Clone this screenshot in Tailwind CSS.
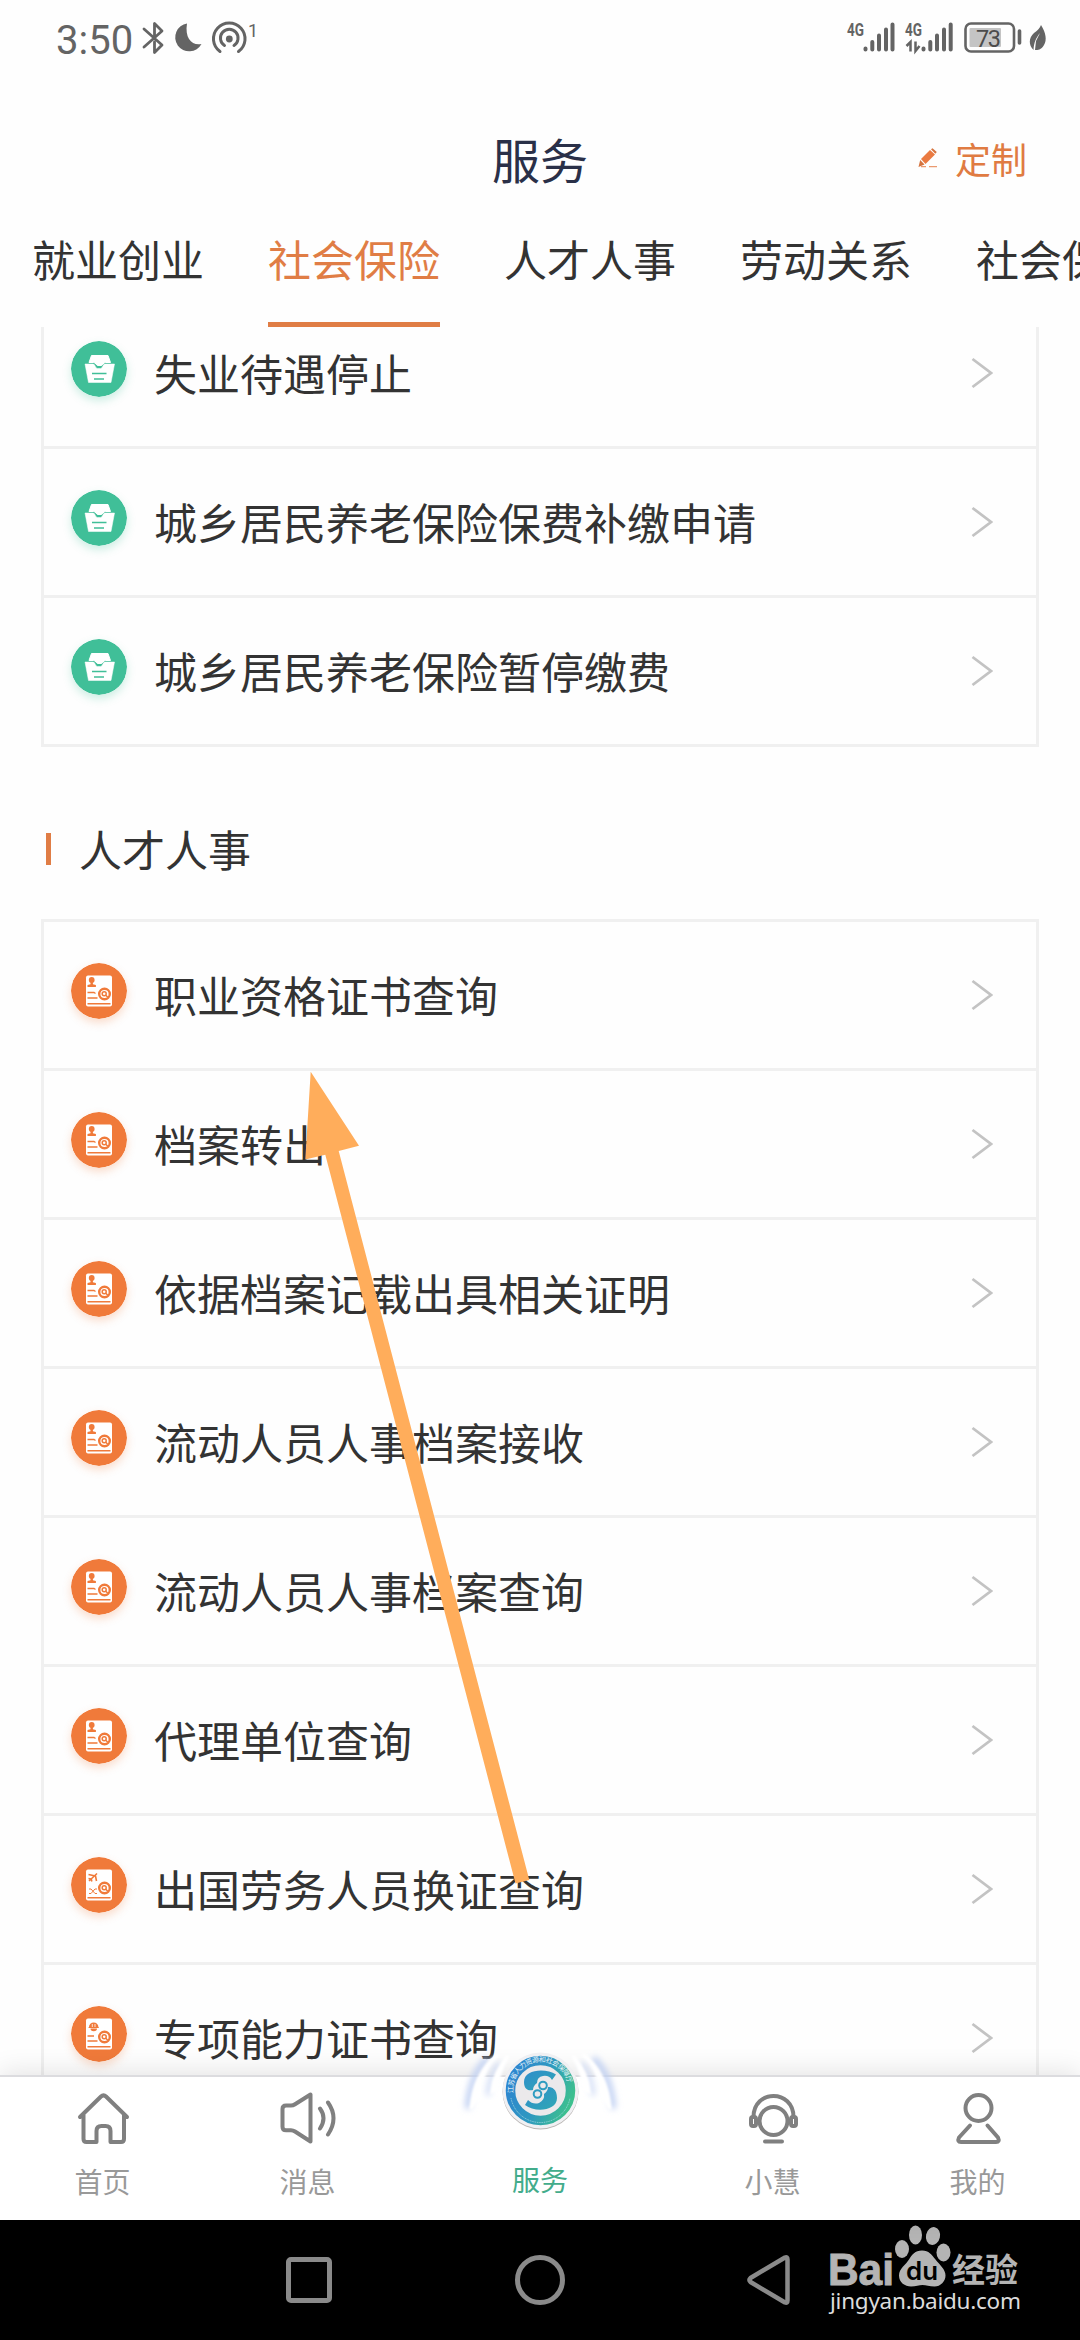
<!DOCTYPE html>
<html lang="zh-CN">
<head>
<meta charset="utf-8">
<title>服务</title>
<script src="https://cdn.jsdelivr.net/npm/@tailwindcss/browser@4"></script>
</head>
<body class="bg-white">
<svg class="hidden">
  <symbol id="tray" viewBox="0 0 56 56">
    <circle cx="28" cy="28" r="28" fill="#40bf98"/>
    <path d="M20.500 14.500h16.500l2.500 7h-5c-2.500 0-2.500 3-4.500 3h-3c-2 0-2-3-4.500-3h-4.500z" fill="#fff" stroke="#fff" stroke-linejoin="round"/>
    <path d="M14 23h8c2.500 0 2 4.500 4.500 4.500h3c2.500 0 2-4.500 4.500-4.500h9.500l-3.500 18.500H17.500z" fill="#fff" stroke="#fff" stroke-linejoin="round" stroke-width="0.500"/>
    <path d="M21 32.500h14.500M23 38h10" stroke="#40bf98" stroke-width="1.400"/>
  </symbol>
  <symbol id="sheet" viewBox="0 0 56 56">
    <circle cx="28" cy="28" r="28" fill="#f07a3a"/>
    <rect x="15" y="12.500" width="26" height="31" rx="2" fill="#fff"/>
    <path d="M16.500 40.700h23" stroke="#f07a3a" stroke-width="1.600"/>
    <circle cx="33.500" cy="31" r="5.300" fill="#fff" stroke="#f07a3a" stroke-width="2.400"/>
    <circle cx="33.200" cy="30.700" r="2" fill="none" stroke="#f07a3a" stroke-width="1.500"/>
    <path d="M34.800 32.300l2 2" stroke="#f07a3a" stroke-width="1.500"/>
  </symbol>
  <symbol id="person" viewBox="0 0 56 56">
    <use href="#sheet"/>
    <circle cx="20.700" cy="17" r="2.900" fill="#f07a3a"/>
    <path d="M19.500 18.500h2.400v2.700l3 .8v2h-8.400v-2l3-.8z" fill="#f07a3a"/>
    <path d="M16.500 29.500h6.500l1.500 1M16.500 35h10" stroke="#f07a3a" stroke-width="1.300" fill="none"/>
  </symbol>
  <symbol id="plane" viewBox="0 0 56 56">
    <use href="#sheet"/>
    <path d="M18 24l8-7.500M17.500 17.500l7 1.500 1 5M17.500 21.500l2.800.5.500 2.500" stroke="#f07a3a" stroke-width="1.600" fill="none" stroke-linejoin="round"/>
    <path d="M18 32h2l4 4.500h2M18 36.500h2l4-4.500h2" stroke="#f07a3a" stroke-width="1" fill="none"/>
  </symbol>
  <symbol id="helmet" viewBox="0 0 56 56">
    <use href="#sheet"/>
    <path d="M18 21a4.700 4.500 0 0 1 9.400 0l.8 1h-11zM19.500 22.500h6.500a3.200 2.600 0 0 1-6.500 0z" fill="#f07a3a"/>
    <path d="M21.300 18v3M24 18v3" stroke="#fff" stroke-width=".8"/>
    <path d="M16.500 30h6.500M16.500 35h10" stroke="#f07a3a" stroke-width="1.300"/>
  </symbol>
</svg>

<div class="relative flex h-[2340px] w-[1080px] flex-col overflow-hidden bg-[#fefefe] font-['Noto_Sans_CJK_SC',sans-serif] text-[#333]">

  <!-- status bar -->
  <div class="flex h-20 shrink-0 items-center pl-14 pr-8">
    <div class="pt-px font-[Roboto] text-[40px] leading-none text-[#646464]">3:50</div>
    <svg class="ml-1.5 h-20 w-32" viewBox="139 0 128 80" fill="none" stroke="#646464" stroke-width="2.800" stroke-linejoin="round" stroke-linecap="round">
      <path d="M144 29L162 45 154.500 52.500V42M144 47L162 31 154.500 23.500V35"/>
      <path d="M187 23.500a14 14 0 1 0 14.500 20.500c-9 2-17-5-14.500-20.500z" fill="#646464" stroke="none"/>
      <g stroke-width="3">
        <path d="M220 51.500a15.800 15.800 0 1 1 18.500 0M224.500 45.500a8.800 8.800 0 1 1 9.500 0"/>
        <circle cx="229.300" cy="39" r="3.400" fill="#646464" stroke="none"/>
      </g>
      <text x="248" y="36.500" font-family="Roboto" font-size="18" fill="#646464" stroke="none">1</text>
    </svg>
    <svg class="ml-auto h-20 w-[204px]" viewBox="844 0 204 80" fill="none" stroke="#646464" stroke-linecap="round">
      <g fill="#646464" stroke="none" font-family="Roboto" font-weight="700" font-size="18">
        <text x="847" y="35.500" textLength="17" lengthAdjust="spacingAndGlyphs">4G</text>
        <text x="905" y="35.500" textLength="17" lengthAdjust="spacingAndGlyphs">4G</text>
      </g>
      <path stroke-width="4" d="M865.500 48.500v1M872.300 42v7.500M879 35.500v14M886 29.500v20M892.500 24.500v25M923.500 48.500v1M930.300 42v7.500M937 35.500v14M944 29.500v20M950.700 24.500v25"/>
      <path stroke-width="2.500" stroke-linecap="butt" d="M906.500 46l4-4v9.500M915.500 41.500v9.500l4-5"/>
      <rect x="965.500" y="23.500" width="48.500" height="28" rx="5.500" stroke-width="2.600"/>
      <rect x="969.500" y="28" width="31.500" height="19" rx="1" fill="#c4c4c4" stroke="none"/>
      <text x="976" y="46.500" font-family="Roboto" font-size="23.500" fill="#4c4c4c" stroke="none" textLength="25">73</text>
      <path stroke-width="3.600" d="M1019.500 31v12"/>
      <path d="M1041 25c5 8 6 15 3 20s-6 5-9 5l1-9 4-8c-4 5-6 9-6.500 17-5-5-5-12 .5-17 4-3 6-5 7-8z" fill="#646464" stroke="none"/>
    </svg>
  </div>

  <!-- title bar -->
  <div class="grid h-[120px] shrink-0 grid-cols-3 items-center pt-9 pr-[53px] pl-[53px]">
    <div></div>
    <h1 class="text-center text-[48px] leading-none text-[#2a3048]">服务</h1>
    <div class="flex items-center justify-end text-[36px] leading-none text-[#e07b42]">
      <svg class="mr-[17px] h-5 w-5" viewBox="0 0 20 20">
        <path d="M3 11l9-9 5 4.500-9.500 9.500z" fill="#ea7a41"/>
        <path d="M13 1.200l1.500-1 4.300 3.800-1.500 1.800zM2.200 12l4.300 4.500L.5 19z" fill="#d5743f"/>
        <path d="M3 18.700h5M11 18.700h8" stroke="#ea9a70" stroke-width="1.300"/>
      </svg>
      <span>定制</span>
    </div>
  </div>

  <!-- category tabs -->
  <div class="flex h-[127px] shrink-0 gap-16 overflow-hidden pt-[26px] pl-8 text-[43px] leading-[64px] whitespace-nowrap">
    <div class="h-[101px] shrink-0">就业创业</div>
    <div class="h-[101px] shrink-0 border-b-[5px] border-[#e07d45] text-[#e07d45]">社会保险</div>
    <div class="h-[101px] shrink-0">人才人事</div>
    <div class="h-[101px] shrink-0">劳动关系</div>
    <div class="h-[101px] shrink-0">社会保障卡</div>
  </div>

  <!-- scrolling service list -->
  <div class="h-[1748px] shrink-0 overflow-hidden px-[41px]">
    <div id="insurance" class="-mt-[27px] border-x-[3px] border-[#f0f0f0]"></div>
    <div class="flex h-[172px] items-center gap-7 pt-[31px] pl-[5px]">
      <div class="h-8 w-[5px] bg-[#e07d45]"></div>
      <h2 class="text-[43px] leading-none">人才人事</h2>
    </div>
    <div id="talent" class="border-x-[3px] border-t-[3px] border-[#f0f0f0]"></div>
  </div>

  <!-- tab bar -->
  <div class="relative grid h-[145px] shrink-0 grid-cols-[205px_205px_260px_205px_205px] border-t-2 border-[#dcdcdf] bg-white text-center text-[28px] leading-none text-[#999] shadow-[0_-4px_24px_rgba(0,0,0,0.10)]">
    <div class="flex flex-col items-center gap-[22px] pt-[14px]">
      <svg class="h-[54px] w-[54px]" viewBox="0 0 54 54" fill="none" stroke="#808080" stroke-width="4" stroke-linecap="round" stroke-linejoin="round">
        <path d="M4 26L25 5.500Q27.500 3 30 5.500L51 26M7.500 24v24q0 3 3 3h10V40q0-5 5-5h4q5 0 5 5v11h10.500q3 0 3-3V24"/>
      </svg>
      <span>首页</span>
    </div>
    <div class="flex flex-col items-center gap-[22px] pt-[14px]">
      <svg class="h-[54px] w-[60px]" viewBox="0 0 60 54" fill="none" stroke="#808080" stroke-width="4" stroke-linecap="round" stroke-linejoin="round">
        <path d="M32.500 3.500v47L17 40.500q-2-1.300-4-1.300H8q-3.500 0-3.500-3.500V18q0-3.500 3.500-3.500h5q2 0 4-1.300zM42 17.500q7 9.500 0 20M50 11.500q11 15.500 0 32"/>
      </svg>
      <span>消息</span>
    </div>
    <div class="pt-[88px] text-[#43ac8b]">服务</div>
    <div class="flex flex-col items-center gap-[22px] pt-[14px]">
      <svg class="h-[54px] w-[54px]" viewBox="0 0 54 54" fill="none" stroke="#808080" stroke-width="4" stroke-linecap="round">
        <circle cx="27.500" cy="30" r="14"/>
        <path d="M7.500 26C7.500-2 47.500-2 47.500 26M19 50.500h17"/>
        <rect x="5" y="26" width="5" height="9" rx="2"/>
        <rect x="45" y="26" width="5" height="9" rx="2"/>
      </svg>
      <span>小慧</span>
    </div>
    <div class="flex flex-col items-center gap-[22px] pt-[14px]">
      <svg class="h-[54px] w-[54px]" viewBox="0 0 54 54" fill="none" stroke="#808080" stroke-width="4" stroke-linecap="round" stroke-linejoin="round">
        <circle cx="27.500" cy="17" r="13"/>
        <path d="M19 34.500L8 46.500q-2 4.500 2 4.500h35q4 0 2-4.500L36.500 34.500"/>
      </svg>
      <span>我的</span>
    </div>

    <!-- raised emblem -->
    <svg class="absolute -top-[45px] left-[450px] h-[100px] w-[180px]" viewBox="450 2032 180 100">
      <defs>
        <linearGradient id="ring" x1="0" y1="0.300" x2="1" y2="0.700">
          <stop offset="0" stop-color="#2e86cf"/><stop offset=".5" stop-color="#2e98c0"/><stop offset="1" stop-color="#3dc08e"/>
        </linearGradient>
        <linearGradient id="mark" x1="0" y1="0" x2="1" y2="1">
          <stop offset="0" stop-color="#2f8dcc"/><stop offset="1" stop-color="#2fa8b4"/>
        </linearGradient>
        <filter id="haze" x="-60%" y="-20%" width="220%" height="140%"><feGaussianBlur stdDeviation="3"/></filter>
        <filter id="soft" x="-30%" y="-10%" width="160%" height="120%"><feGaussianBlur stdDeviation=".9"/></filter>
        <path id="arc" d="M513.500 2093a27.500 27.500 0 1 1 54.500 0"/>
        <g id="wave" fill="none" stroke-linecap="round">
          <path d="M468 2106C470 2086 476 2070 486 2060" stroke="#bccdf2" stroke-width="6" filter="url(#haze)"/>
          <path d="M471 2109C473 2084 482 2067 498 2054c-11 14-17 24-20 44z" fill="#fff" stroke="#fff" stroke-width="3" filter="url(#soft)"/>
          <path d="M488 2094C489 2082 493 2072 499 2064" stroke="#c6d4f4" stroke-width="4" filter="url(#haze)"/>
          <path d="M492 2092C493 2078 499 2066 508 2056c-7 13-10 22-12 34z" fill="#fff" stroke="#fff" stroke-width="3" filter="url(#soft)"/>
        </g>
      </defs>
      <use href="#wave"/>
      <use href="#wave" transform="translate(1081 0) scale(-1 1)"/>
      <circle cx="540.500" cy="2091.500" r="38" fill="#b9b5b3"/>
      <circle cx="540.500" cy="2090.500" r="38" fill="#f0f0f3"/>
      <circle cx="540.500" cy="2090.500" r="30" fill="#ebe9eb" stroke="url(#ring)" stroke-width="9.500"/>
      <text font-family="Noto Sans CJK SC" font-size="7" fill="#e8f4fa"><textPath href="#arc" textLength="84">江苏省人力资源和社会保障厅</textPath></text>
      <path d="M511 2098a30 30 0 0 0 59 0" fill="none" stroke="#9fd6e0" stroke-width="1" stroke-dasharray="1 .8"/>
      <path d="M556 2074.500C546 2068 524 2069 524 2082C524 2090 529 2091 533 2090Q533 2086 537 2083Q537 2077 543 2076Q549 2075 552 2080Z" fill="url(#mark)"/>
      <path d="M525 2105C535 2113 557 2111 557 2098C557 2089 552 2087 548 2087Q548 2091 544 2094Q545 2100 539 2103Q533 2105 528 2100Z" fill="url(#mark)"/>
      <circle cx="543" cy="2085.500" r="3.800" fill="none" stroke="#2f9cc0" stroke-width="2"/>
      <circle cx="537.500" cy="2094" r="3.800" fill="none" stroke="#2f9cc0" stroke-width="2"/>
    </svg>
  </div>

  <!-- system navigation -->
  <div class="flex h-[120px] shrink-0 items-center bg-black pl-[286px]">
    <div class="h-[46px] w-[46px] rounded-[5px] border-[5px] border-[#8a8a8a]"></div>
    <div class="ml-[183px] h-[50px] w-[50px] rounded-full border-[5px] border-[#8a8a8a]"></div>
    <svg class="ml-[181px] h-[52px] w-[46px]" viewBox="746 2254 46 52" fill="none" stroke="#8a8a8a" stroke-width="4.500" stroke-linejoin="round">
      <path d="M750.500 2278L785 2257.500q2.500-1 2.500 2v41q0 3-2.500 2L750.500 2282q-2-2 0-4z"/>
    </svg>
    <svg class="ml-8 h-[120px] w-52" viewBox="824 2220 208 120" fill="#b4b4b4">
      <text x="828" y="2284.500" font-family="Liberation Sans" font-size="44" font-weight="700" stroke="#b4b4b4" stroke-width="1" textLength="66" lengthAdjust="spacingAndGlyphs">Bai</text>
      <ellipse cx="902" cy="2249" rx="7" ry="9"/>
      <ellipse cx="915.500" cy="2235" rx="6.500" ry="9.500"/>
      <ellipse cx="933" cy="2236" rx="7" ry="9" transform="rotate(12 933 2236)"/>
      <ellipse cx="943.500" cy="2252.500" rx="7" ry="9"/>
      <path d="M922 2250.500c-7 0-10 4-13 9s-10 9-10 16 6 11 12 11c5 0 8-1.500 11.500-1.500s7 1.500 12 1.500c6 0 11-5 11-11s-6-11-10-16-6.500-9-13.500-9z"/>
      <text x="906" y="2280" font-family="Inter" font-size="25" font-weight="600" fill="#000" textLength="32" lengthAdjust="spacingAndGlyphs">du</text>
      <text x="952" y="2282" font-family="Noto Sans CJK SC" font-size="33" font-weight="700">经验</text>
      <text x="830" y="2309" font-family="Noto Sans" font-size="22.500" fill="#dcdcdc" textLength="191">jingyan.baidu.com</text>
    </svg>
  </div>

  <!-- pointer arrow -->
  <svg class="absolute top-[1060px] left-[290px] h-[840px] w-[260px]" viewBox="290 1060 260 840">
    <path d="M310.700 1071.700L359 1145.700 338.700 1151 529.300 1880 515.500 1883.500 325.300 1154.700 305.300 1159.500z" fill="#ffad5b"/>
  </svg>
</div>

<script>
  const row = (icon, label) => `
    <div class="flex h-[149px] items-center border-b-[3px] border-[#f0f0f0] pr-[43px] pl-[27px]">
      <svg class="relative -top-1 h-14 w-14 rounded-full ${icon === 'tray' ? 'shadow-[0_4px_8px_#40bf9840]' : 'shadow-[0_4px_8px_#f07a3a40]'}"><use href="#${icon}"/></svg>
      <span class="ml-[27px] pb-0.5 text-[43px] leading-none whitespace-nowrap">${label}</span>
      <svg class="ml-auto h-8 w-[22px]" viewBox="0 0 22 32" fill="none" stroke="#c3c3c3" stroke-width="2.800"><path d="M1.500 2L20 16 1.500 30"/></svg>
    </div>`;
  const fill = (id, rows) => {
    document.getElementById(id).innerHTML = rows.map(r => row(...r)).join('');
  };
  fill('insurance', [
    ['tray', '失业待遇停止'],
    ['tray', '城乡居民养老保险保费补缴申请'],
    ['tray', '城乡居民养老保险暂停缴费'],
  ]);
  fill('talent', [
    ['person', '职业资格证书查询'],
    ['person', '档案转出'],
    ['person', '依据档案记载出具相关证明'],
    ['person', '流动人员人事档案接收'],
    ['person', '流动人员人事档案查询'],
    ['person', '代理单位查询'],
    ['plane', '出国劳务人员换证查询'],
    ['helmet', '专项能力证书查询'],
  ]);
</script>
</body>
</html>
